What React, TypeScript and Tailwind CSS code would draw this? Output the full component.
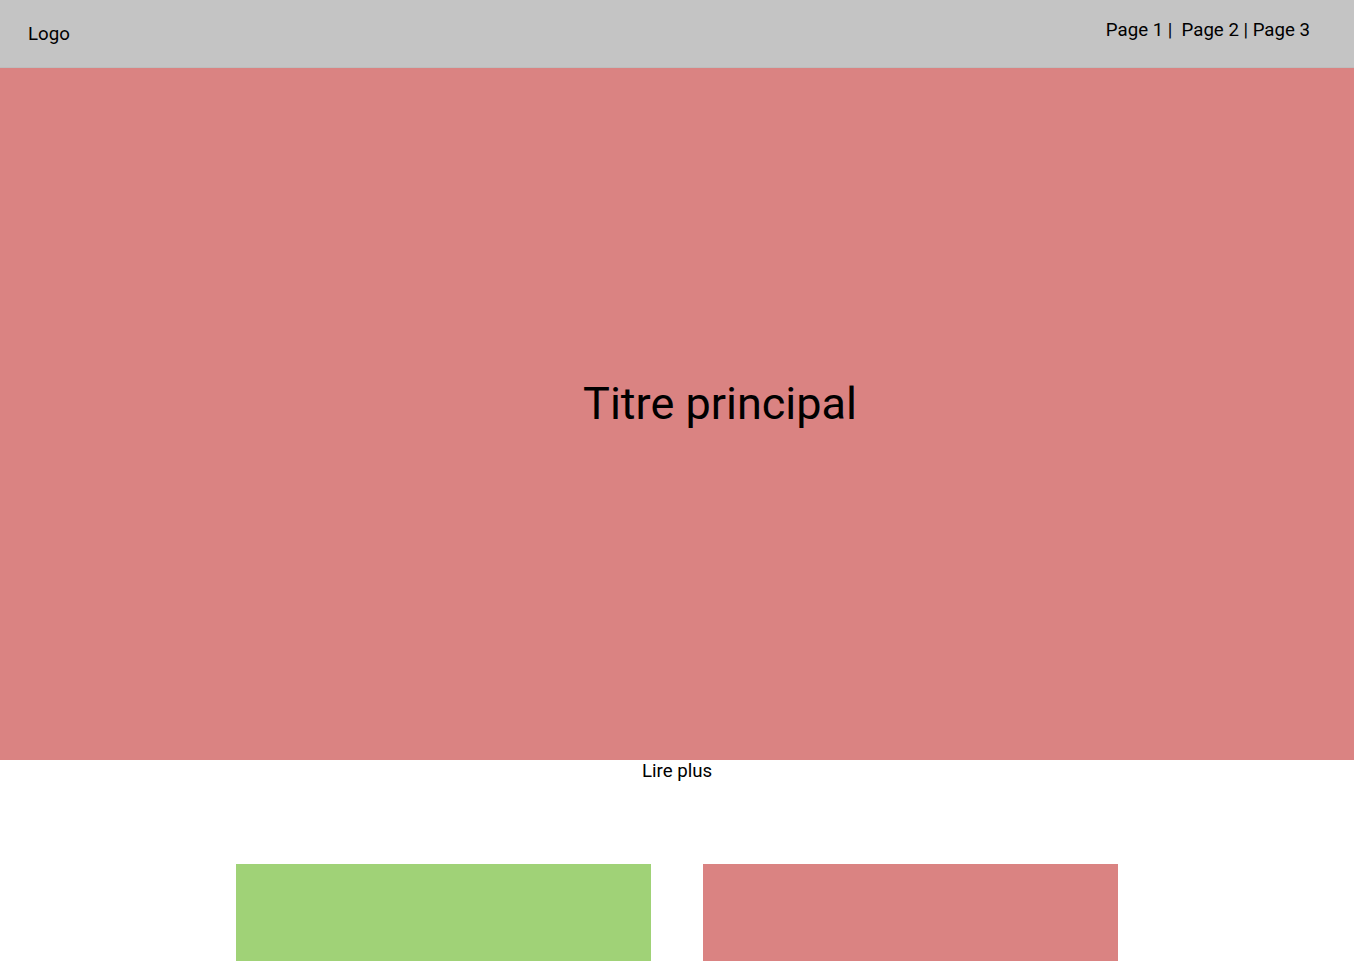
export default function App() {
  return (
    <div className="min-h-screen bg-white font-['Roboto',sans-serif] text-black">
      <header className="h-[68px] bg-[#c4c4c4] flex justify-between border-b border-[#bdbdbd]">
        <div className="pl-[28px] pt-[22px] text-[18.67px] leading-[24px]">Logo</div>
        <nav className="pr-[44px] pt-[18px] text-[18.67px] leading-[24px] whitespace-pre">
          Page 1 |  Page 2 | Page 3
        </nav>
      </header>

      <section className="h-[692px] bg-[#da8382] flex items-center justify-center pl-[86px] pb-[20px]">
        <h1 className="text-[45px] leading-[56px] font-normal">Titre principal</h1>
      </section>

      <div className="text-center text-[18.67px] leading-[22px]">Lire plus</div>

      <div className="mt-[82px] flex justify-center gap-[52px]">
        <div className="w-[415px] h-[100px] bg-[#a0d277]"></div>
        <div className="w-[415px] h-[100px] bg-[#da8382]"></div>
      </div>
    </div>
  );
}
